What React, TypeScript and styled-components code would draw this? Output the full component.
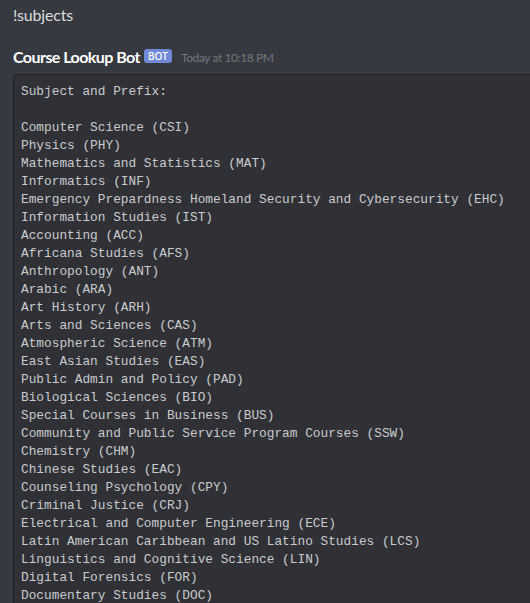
import React from "react";
import styled, { createGlobalStyle } from "styled-components";

const GlobalStyle = createGlobalStyle`
  html, body {
    margin: 0;
    padding: 0;
    background-color: #36393f;
    overflow: hidden;
  }
`;

const Chat = styled.div`
  width: 530px;
  height: 603px;
  overflow: hidden;
  font-family: Lato, "Noto Sans", sans-serif;
  color: #dcddde;
`;

const PlainLine = styled.div`
  padding: 4px 0 0 13px;
  font-size: 16px;
  line-height: 22px;
  letter-spacing: -0.2px;
`;

const Group = styled.div`
  margin-top: 19px;
  padding-left: 13px;
`;

const Header = styled.div`
  display: flex;
  align-items: center;
  height: 22px;
`;

const Username = styled.span`
  font-size: 16px;
  font-weight: 700;
  color: #ffffff;
  letter-spacing: -0.55px;
`;

const Badge = styled.span`
  display: inline-flex;
  align-items: center;
  justify-content: center;
  height: 14px;
  width: 28px;
  margin-left: 4px;
  border-radius: 3px;
  background-color: #7289da;
  color: #ffffff;
  font-family: "Noto Sans", sans-serif;
  font-size: 10px;
  font-weight: 500;
  line-height: 14px;
`;

const Timestamp = styled.span`
  margin-left: 9px;
  font-size: 12px;
  color: #72767d;
  padding-top: 2px;
  letter-spacing: -0.4px;
`;

const CodeBlock = styled.pre`
  margin: 7px -60px 0 0;
  padding: 8px 7px 7px;
  background-color: #2f3136;
  border: 1px solid #202225;
  border-radius: 4px;
  font-family: "Liberation Mono", "DejaVu Sans Mono", monospace;
  font-size: 12.8px;
  line-height: 18px;
  color: #c9cbce;
  white-space: pre;
`;

const subjects = [
  "Computer Science (CSI)",
  "Physics (PHY)",
  "Mathematics and Statistics (MAT)",
  "Informatics (INF)",
  "Emergency Prepardness Homeland Security and Cybersecurity (EHC)",
  "Information Studies (IST)",
  "Accounting (ACC)",
  "Africana Studies (AFS)",
  "Anthropology (ANT)",
  "Arabic (ARA)",
  "Art History (ARH)",
  "Arts and Sciences (CAS)",
  "Atmospheric Science (ATM)",
  "East Asian Studies (EAS)",
  "Public Admin and Policy (PAD)",
  "Biological Sciences (BIO)",
  "Special Courses in Business (BUS)",
  "Community and Public Service Program Courses (SSW)",
  "Chemistry (CHM)",
  "Chinese Studies (EAC)",
  "Counseling Psychology (CPY)",
  "Criminal Justice (CRJ)",
  "Electrical and Computer Engineering (ECE)",
  "Latin American Caribbean and US Latino Studies (LCS)",
  "Linguistics and Cognitive Science (LIN)",
  "Digital Forensics (FOR)",
  "Documentary Studies (DOC)",
];

const App: React.FC = () => {
  const text = ["Subject and Prefix:", "", ...subjects].join("\n");
  return (
    <Chat>
      <GlobalStyle />
      <PlainLine>!subjects</PlainLine>
      <Group>
        <Header>
          <Username>Course Lookup Bot</Username>
          <Badge>BOT</Badge>
          <Timestamp>Today at 10:18 PM</Timestamp>
        </Header>
        <CodeBlock>{text}</CodeBlock>
      </Group>
    </Chat>
  );
};

export default App;
